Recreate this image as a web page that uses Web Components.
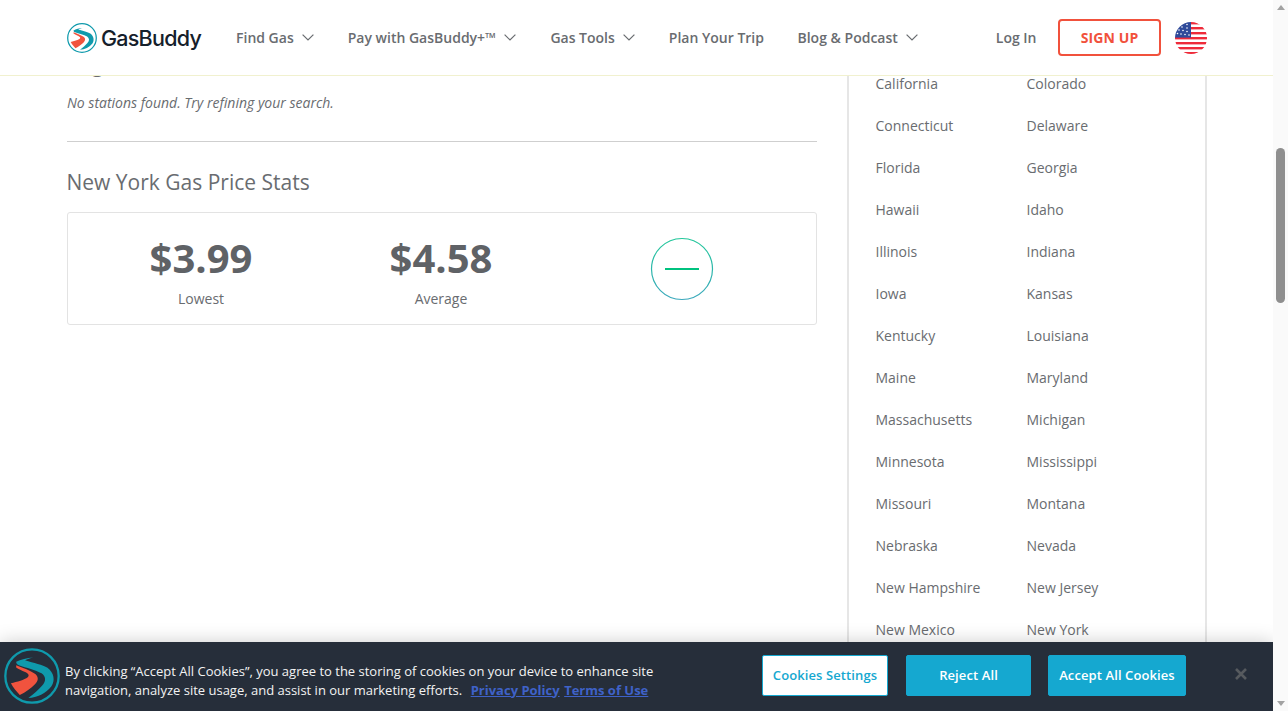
<!DOCTYPE html>
<html lang="en"><head><meta charset="utf-8"><title>New York Gas Prices</title>
<style>
html,body{margin:0;padding:0;height:100%;overflow:hidden;background:#fff}
body{font-family:"Open Sans",sans-serif;color:#696c70}
</style></head>
<body>
<gb-app></gb-app>
<script>
const MARK=`<circle cx="95" cy="95" r="81" fill="none" stroke="#0f9aac" stroke-width="7"/>
<path d="M99 39C80 41 60 45 47 52C47 57 49 60 55 62C78 70 106 76 124 87C138 97 138 112 126 124C114 137 100 150 84 162C110 160 138 148 154 126C166 108 162 86 142 70C128 60 100 56 74 47C80 44 90 41 99 39Z" fill="#0f9aac"/>
<path d="M47 62C66 70 92 78 106 90C116 100 114 110 104 120C92 132 76 144 58 153C48 142 38 130 31 117C50 113 72 107 82 99C88 93 84 88 74 83C64 78 54 74 47 69Z" fill="#f1533e"/>`;

function def(name,html){
  customElements.define(name,class extends HTMLElement{
    constructor(){super();this.attachShadow({mode:'open'}).innerHTML=html}
  });
}

def('gb-mark',`<style>:host{display:block;width:var(--s,30px);height:var(--s,30px)}svg{display:block;width:100%;height:100%}</style>
<svg viewBox="10 10 170 170">${MARK}</svg>`);

def('gb-logo',`<style>:host{display:flex;align-items:center;gap:4px;--s:30px}
span{font:500 21.5px/1 "Inter",sans-serif;color:#15202b;letter-spacing:-.75px;position:relative;top:1px}</style>
<gb-mark></gb-mark><span>GasBuddy</span>`);

def('gb-navitem',`<style>:host{display:inline-flex;align-items:center;gap:8px;font:600 14px/20px "Open Sans",sans-serif;color:#696c70;white-space:nowrap}
svg{display:var(--chev,block);width:12px;height:7px;fill:none;stroke:#696c70;stroke-width:1.2}</style>
<slot></slot><svg viewBox="0 0 12 7"><path d="M.6.6 6 6 11.4.6"/></svg>`);

def('gb-flag',`<style>:host{display:block;width:32px;height:32px}svg{display:block}</style>
<svg width="32" height="32" viewBox="0 0 32 32"><defs><clipPath id="c"><circle cx="16" cy="16" r="16"/></clipPath></defs>
<g clip-path="url(#c)"><rect width="32" height="32" fill="#fff"/>
<g fill="#ee2b3a"><rect x="16" y="0" width="16" height="2.4"/><rect x="16" y="5" width="16" height="2.4"/><rect x="16" y="10" width="16" height="2.4"/><rect x="0" y="15" width="32" height="2.4"/><rect y="20" width="32" height="2.4"/><rect y="25" width="32" height="2.4"/><rect y="30" width="32" height="2.4"/></g>
<rect width="16" height="15.6" fill="#2f4a9a"/>
<g fill="#fff"><circle cx="12" cy="2.5" r=".8"/><circle cx="7" cy="5" r=".8"/><circle cx="12" cy="6" r=".8"/><circle cx="4" cy="8" r=".8"/><circle cx="8" cy="8.5" r=".8"/><circle cx="12" cy="9.5" r=".8"/><circle cx="2.5" cy="11.5" r=".8"/><circle cx="6" cy="12" r=".8"/><circle cx="10" cy="12.5" r=".8"/><circle cx="14" cy="13" r=".8"/></g></g></svg>`);

def('gb-header',`<style>:host{display:flex;align-items:center;height:76px;box-sizing:border-box;padding:0 0 0 67px;background:#fff;border-bottom:1px solid #f1f1cf;flex:none;position:relative;z-index:2}
gb-logo{margin-right:35px}
nav{display:flex;align-items:center;gap:34px}
.tools{margin-left:.5px}.blog{margin-left:-.5px}
.right{display:flex;align-items:center;margin-left:auto;margin-right:66px}
.login{font:600 14px/20px "Open Sans",sans-serif;margin-right:21.5px;color:#696c70}
.signup{box-sizing:border-box;width:103px;height:37px;border:2px solid #f1513c;border-radius:4px;color:#f1513c;font:700 14px/33px "Open Sans",sans-serif;text-align:center;letter-spacing:.1px;margin-right:14px}
</style>
<gb-logo></gb-logo>
<nav><gb-navitem>Find Gas</gb-navitem><gb-navitem>Pay with GasBuddy+™</gb-navitem><gb-navitem class="tools">Gas Tools</gb-navitem><gb-navitem style="--chev:none">Plan Your Trip</gb-navitem><gb-navitem class="blog">Blog &amp; Podcast</gb-navitem></nav>
<div class="right"><span class="login">Log In</span><span class="signup">SIGN UP</span><gb-flag></gb-flag></div>`);

def('gb-stat',`<style>:host{display:block;text-align:center;padding-right:2px}
b{display:block;font:700 40px/52px "Open Sans",sans-serif;color:#5f6266}
span{display:block;font:400 14px/20px "Open Sans",sans-serif;color:#696c70;margin-top:5px}</style>
<b><slot name="v"></slot></b><span><slot></slot></span>`);

def('gb-trend',`<style>:host{display:flex;align-items:center;justify-content:center}svg{display:block}</style>
<svg width="64" height="64" viewBox="0 0 64 64"><defs><linearGradient id="g" x1="0" y1="0" x2="0" y2="1"><stop offset="0" stop-color="#22c79a"/><stop offset="1" stop-color="#3aa8bc"/></linearGradient></defs>
<circle cx="32" cy="32" r="30.5" fill="none" stroke="url(#g)" stroke-width="1.2"/><rect x="15" y="31" width="34" height="2" fill="#00c27f"/></svg>`);

def('gb-statcard',`<style>:host{display:grid;grid-template-columns:repeat(3,240px);justify-content:center;box-sizing:border-box;height:113px;padding-top:19px;border:1px solid #e3e3e3;border-radius:3px;margin-top:16px}
gb-trend{height:74px}</style>
<gb-stat><span slot="v">$3.99</span>Lowest</gb-stat><gb-stat><span slot="v">$4.58</span>Average</gb-stat><gb-trend></gb-trend>`);

def('gb-left',`<style>:host{display:block;font-family:"Open Sans",sans-serif;padding-top:2px}
.clip{font:400 21px/28px "Open Sans",sans-serif;height:20px;margin-top:-28px;color:#696c70}
i{display:block;font:italic 400 14px/20px "Open Sans",sans-serif;color:#696c70;margin-top:23px}
hr{border:0;border-top:1px solid #cfcfcf;margin:28px 0 0}
h2{font:400 21px/28px "Open Sans",sans-serif;color:#696c70;margin:26px 0 0 -.5px}</style>
<div class="clip">Regular</div>
<i>No stations found. Try refining your search.</i><hr>
<h2>New York Gas Price Stats</h2><gb-statcard></gb-statcard>`);

const STATES=["California","Colorado","Connecticut","Delaware","Florida","Georgia","Hawaii","Idaho","Illinois","Indiana","Iowa","Kansas","Kentucky","Louisiana","Maine","Maryland","Massachusetts","Michigan","Minnesota","Mississippi","Missouri","Montana","Nebraska","Nevada","New Hampshire","New Jersey","New Mexico","New York"];
def('gb-states',`<style>:host{display:grid;grid-template-columns:151px 151px;grid-auto-rows:42px;box-sizing:border-box;width:360px;padding-left:26.5px;border-left:2px solid #e6e6e6;border-right:2px solid #e6e6e6;margin-top:-2px;font:400 14px/20px "Open Sans",sans-serif;color:#696c70}
span{white-space:nowrap}</style>${STATES.map(s=>`<span>${s}</span>`).join('')}`);

def('gb-scrollbar',`<style>:host{display:flex;flex-direction:column;width:15px;flex:none;background:#fafafa;position:relative;z-index:4}
.u,.d{height:15px;display:flex;align-items:center;justify-content:center;flex:none}
.u::before{content:"";border:4.5px solid transparent;border-top:0;border-bottom:5px solid #a3a3a3}
.d::before{content:"";border:4.5px solid transparent;border-bottom:0;border-top:5px solid #a3a3a3}
.t{flex:1;padding-top:133px}
.th{width:9px;height:155px;margin-left:3px;background:#8f8f8f;border-radius:5px}</style>
<div class="u"></div><div class="t"><div class="th"></div></div><div class="d"></div>`);

def('gb-cookie',`<style>:host{position:absolute;left:0;right:0;bottom:0;height:69px;background:#262e3a;box-shadow:0 0 18px rgba(0,0,0,.2);display:flex;align-items:center;z-index:3;font-family:"Open Sans",sans-serif}
gb-mark{--s:56px;margin-left:4px;margin-top:-1px;flex:none}
.p{margin:0 0 0 5px;width:600px;font:400 13px/19px "Open Sans",sans-serif;color:#f3f3f3;flex:none;position:relative;top:4px}
.l{display:flex;white-space:pre}
a{color:#3f62c8;font-weight:700;text-decoration:underline;margin-left:8.5px}a+a{margin-left:4.5px}
.b{box-sizing:border-box;height:41px;border-radius:2px;border:1px solid #15a8d0;background:#15a8d0;color:#fff;font:600 13px/39px "Open Sans",sans-serif;letter-spacing:.1px;text-align:center;flex:none;position:relative;top:-1px}
.s{width:126px;background:#fff;color:#15a8d0;margin-left:97px}
.r{width:125px;margin-left:18px}
.a{width:138px;margin-left:17px}
svg{margin-left:49px;position:relative;top:-3px;flex:none}</style>
<gb-mark></gb-mark>
<div class="p"><div class="l"><span>By clicking “Accept All Cookies”, you agree to the storing of cookies on your device to enhance site</span></div>
<div class="l"><span>navigation, analyze site usage, and assist in our marketing efforts.</span><a>Privacy Policy</a><a>Terms of Use</a></div></div>
<div class="b s">Cookies Settings</div><div class="b r">Reject All</div><div class="b a">Accept All Cookies</div>
<svg width="12" height="12" viewBox="0 0 12 12"><path d="M1 1 11 11M11 1 1 11" stroke="#565a5e" stroke-width="2.6" fill="none"/></svg>`);

def('gb-app',`<style>:host{display:flex;width:1288px;height:711px;overflow:hidden}
.page{position:relative;flex:1;min-width:0;display:flex;flex-direction:column;overflow:hidden}
main{flex:1;min-height:0;display:grid;grid-template-columns:750px 360px;column-gap:30px;padding-left:67px;align-items:start}
gb-states{align-self:stretch}</style>
<div class="page"><gb-header></gb-header><main><gb-left></gb-left><gb-states></gb-states></main><gb-cookie></gb-cookie></div><gb-scrollbar></gb-scrollbar>`);
</script>
</body></html>
